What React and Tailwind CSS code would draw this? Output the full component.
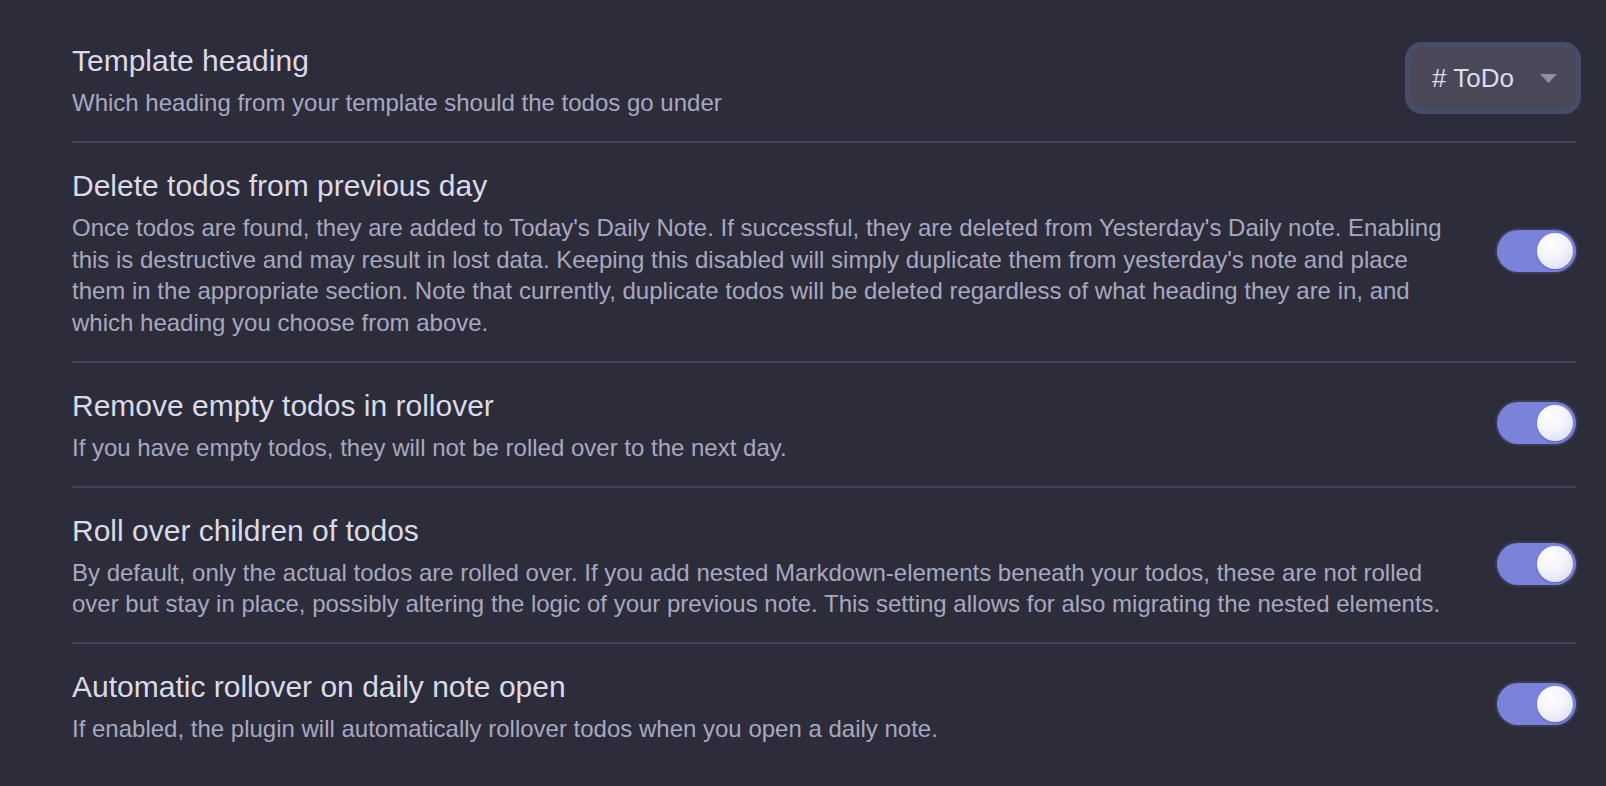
import React from 'react';

const settings = [
  {
    name: 'Delete todos from previous day',
    desc: "Once todos are found, they are added to Today's Daily Note. If successful, they are deleted from Yesterday's Daily note. Enabling this is destructive and may result in lost data. Keeping this disabled will simply duplicate them from yesterday's note and place them in the appropriate section. Note that currently, duplicate todos will be deleted regardless of what heading they are in, and which heading you choose from above.",
  },
  {
    name: 'Remove empty todos in rollover',
    desc: 'If you have empty todos, they will not be rolled over to the next day.',
  },
  {
    name: 'Roll over children of todos',
    desc: 'By default, only the actual todos are rolled over. If you add nested Markdown-elements beneath your todos, these are not rolled over but stay in place, possibly altering the logic of your previous note. This setting allows for also migrating the nested elements.',
  },
  {
    name: 'Automatic rollover on daily note open',
    desc: 'If enabled, the plugin will automatically rollover todos when you open a daily note.',
  },
];

function Toggle() {
  return (
    <div className="relative w-[79px] h-[42px] shrink-0 rounded-full bg-[#7b82da] shadow-[0_0_0_2px_#3a3b58]">
      <div className="absolute right-[3px] top-[3px] w-[36px] h-[36px] rounded-full bg-[radial-gradient(circle_at_38%_32%,#ffffff_0%,#f3f3fb_45%,#d4d4ee_100%)] shadow-[0_1px_2px_rgba(0,0,0,0.25)]" />
    </div>
  );
}

function Dropdown() {
  return (
    <div className="flex items-center justify-between w-[166px] h-[62px] shrink-0 rounded-[12px] bg-[#4a4858] shadow-[0_0_0_5px_#474c68] pl-[22px] pr-[19px]">
      <span className="text-[26px] text-[#dcdcea]">
        # ToDo
      </span>
      <svg width="17" height="9" viewBox="0 0 17 9">
        <path d="M0 0 L17 0 L8.5 9 Z" fill="#8f8e9c" />
      </svg>
    </div>
  );
}

function SettingItem({ name, desc, control, first }) {
  return (
    <div
      className={
        'flex items-center gap-[32px] pt-[20px] pb-[22.5px] ' +
        (first ? '' : 'border-t-2 border-[#444356]')
      }
    >
      <div className="flex-1 min-w-0">
        <div className="text-[30px] leading-[45px] text-[#dadae8]">{name}</div>
        <div className="mt-[4px] text-[24px] leading-[31.5px] text-[#a8a8c0]">{desc}</div>
      </div>
      {control}
    </div>
  );
}

export default function App() {
  return (
    <div
      className="min-h-screen w-full bg-[#2d2c3a] pl-[72px] pr-[30px] pt-[18px]"
      style={{ fontFamily: '"Liberation Sans", Arial, sans-serif' }}
    >
      <SettingItem
        first
        name="Template heading"
        desc="Which heading from your template should the todos go under"
        control={<Dropdown />}
      />
      {settings.map((s) => (
        <SettingItem key={s.name} name={s.name} desc={s.desc} control={<Toggle />} />
      ))}
    </div>
  );
}
